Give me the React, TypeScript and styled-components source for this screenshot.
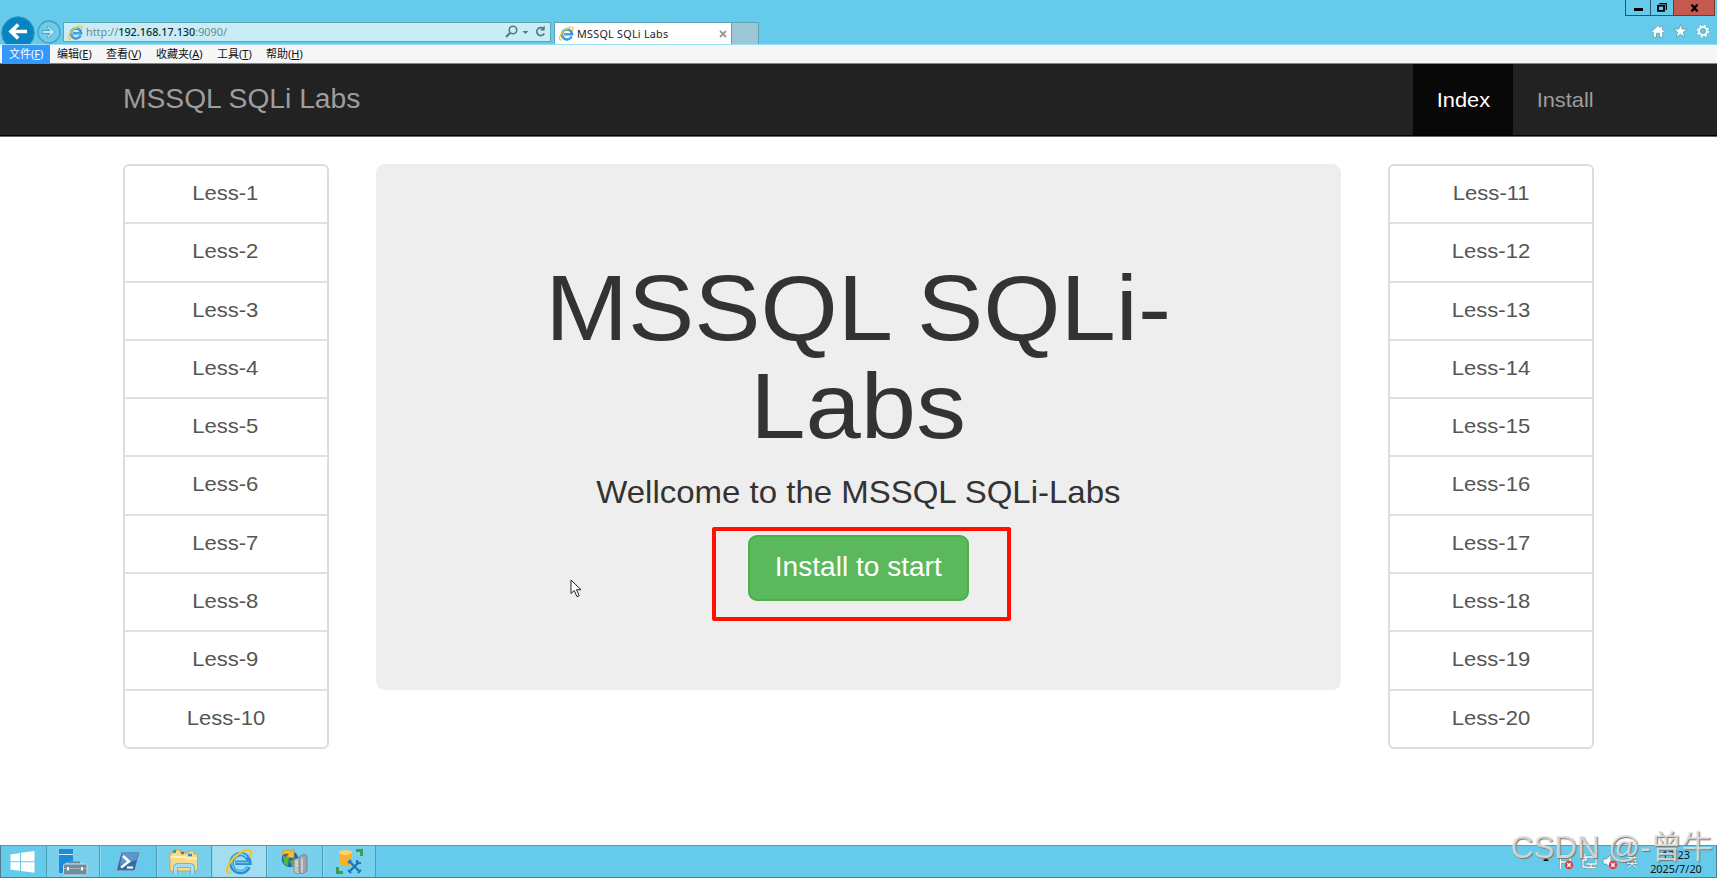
import styled, { createGlobalStyle } from 'styled-components';

const menuItems = [
  { label: '文件', hotkey: 'F', width: 48 },
  { label: '编辑', hotkey: 'E', width: 49 },
  { label: '查看', hotkey: 'V', width: 50 },
  { label: '收藏夹', hotkey: 'A', width: 61 },
  { label: '工具', hotkey: 'T', width: 49 },
  { label: '帮助', hotkey: 'H', width: 51 },
];

const leftLessons = Array.from({ length: 10 }, (_, i) => `Less-${i + 1}`);
const rightLessons = Array.from({ length: 10 }, (_, i) => `Less-${i + 11}`);

function IeLogo({ size }: { size: number }) {
  return (
    <svg width={size} height={size} viewBox="0 0 28 28" fill="none">
      <path
        d="M23.5 19.5 A9.3 9.3 0 1 1 24.3 15.2 H9.5"
        stroke="#2b8fd6"
        strokeWidth="4.6"
      />
      <path
        d="M22.6 19.5 A8.8 8.8 0 0 1 6.4 13 M10 15 H23.5"
        stroke="#6cc3ef"
        strokeWidth="1.6"
      />
      <path d="M7 11 A8.6 8.6 0 0 1 21.5 9.5" stroke="#7fd0f5" strokeWidth="1.6" />
      <path
        d="M4.6 25.8 C-1.5 27 1 17.5 8 10.3 C15 3 24.5 -0.5 26 3.6 C26.5 5 25.9 7 25 8.6"
        stroke="#f5c42c"
        strokeWidth="2.3"
        strokeLinecap="round"
      />
    </svg>
  );
}

function Browser() {
  return (
    <Chrome>
      <NavRow>
        <BackButton>
          <svg width="34" height="34" viewBox="0 0 34 34">
            <circle cx="17" cy="17" r="16.3" fill="#0684c4" stroke="#3d96bb" />
            <path d="M26 15.5 H10 M17.2 8.5 L10 15.5 L17.2 22.5" fill="none" stroke="#fff" strokeWidth="3.6" />
          </svg>
        </BackButton>
        <ForwardButton>
          <svg width="24" height="24" viewBox="0 0 24 24">
            <circle cx="12" cy="12" r="11" fill="#6ecbe9" stroke="#4a9fbf" strokeWidth="1.3" />
            <path
              d="M5.6 10.5 H13 L9.9 7.2 L11.5 5.9 L17.8 12 L11.5 18.1 L9.9 16.8 L13 13.5 H5.6 Z"
              fill="#bdeaf6"
              stroke="#499bb8"
              strokeWidth="0.9"
            />
          </svg>
        </ForwardButton>
        <AddressBar>
          <IeLogo size={15} />
          <Url>http://<b>192.168.17.130</b>:9090/</Url>
          <AddressTools>
            <svg width="42" height="16" viewBox="0 0 42 16" fill="none" stroke="#557985">
              <circle cx="8" cy="6" r="3.8" strokeWidth="1.6" />
              <path d="M5.2 8.8 L1 13" strokeWidth="2.2" />
              <path d="M17.5 7 H23.5 L20.5 10 Z" fill="#557985" stroke="none" />
              <path d="M39 5.2 A4 4 0 1 0 39.3 9.5" strokeWidth="1.7" />
              <path d="M39.7 1.5 V6.4 H34.9 Z" fill="#557985" stroke="none" />
            </svg>
          </AddressTools>
        </AddressBar>
        <Tab>
          <IeLogo size={15} />
          <TabTitle>MSSQL SQLi Labs</TabTitle>
          <svg width="8" height="8" viewBox="0 0 8 8">
            <path d="M1 1 L7 7 M7 1 L1 7" stroke="#9a9a9a" strokeWidth="1.8" />
          </svg>
        </Tab>
        <NewTab />
        <WindowSide>
          <WindowButtons>
            <WindowButton $width={25}>
              <svg width="9" height="7"><rect y="4" width="9" height="3" /></svg>
            </WindowButton>
            <WindowButton $width={23}>
              <svg width="10" height="9" viewBox="0 0 10 9" fill="none" stroke="#000">
                <path d="M2.5 0.7 H9.3 V7" strokeWidth="1.2" />
                <rect x="1" y="2.7" width="6" height="5.2" strokeWidth="1.8" />
              </svg>
            </WindowButton>
            <WindowButton $width={41} $close>
              <svg width="9" height="8" viewBox="0 0 9 8">
                <path d="M1.5 0.5 L7.5 7.5 M7.5 0.5 L1.5 7.5" stroke="#000" strokeWidth="2.2" />
              </svg>
            </WindowButton>
          </WindowButtons>
          <BrowserTools>
            <svg width="14" height="13" viewBox="0 0 14 13">
              <path
                d="M7 0.6 L9 2.4 V1.2 H11.3 V4.5 L13.5 6.7 L12.4 7.7 L11.7 7.1 V12.3 H8.5 V8.3 H5.5 V12.3 H2.3 V7.1 L1.6 7.7 L0.5 6.7 Z"
                fill="#fff"
                stroke="#5593a8"
                strokeWidth="0.7"
              />
            </svg>
            <svg width="15" height="14" viewBox="0 0 15 14">
              <path
                d="M7.5 0.4 L9.2 5.1 H14.4 L10.3 8.2 L11.8 13.2 L7.5 10.2 L3.2 13.2 L4.7 8.2 L0.6 5.1 H5.8 Z"
                fill="#fff"
                stroke="#5593a8"
                strokeWidth="0.7"
              />
            </svg>
            <svg width="14" height="14" viewBox="0 0 14 14" fill="none">
              <circle cx="7" cy="7" r="5.5" stroke="#5593a8" strokeWidth="3" strokeDasharray="2.3 2.02" />
              <circle cx="7" cy="7" r="5.5" stroke="#fff" strokeWidth="2" strokeDasharray="2.2 2.12" />
              <circle cx="7" cy="7" r="3.7" stroke="#fff" strokeWidth="2" />
              <circle cx="7" cy="7" r="2.5" stroke="#5593a8" strokeWidth="0.7" />
            </svg>
          </BrowserTools>
        </WindowSide>
      </NavRow>
      <MenuBar>
        {menuItems.map((item, i) => (
          <MenuItem key={item.hotkey} $width={item.width} $active={i === 0}>
            {item.label}(<u>{item.hotkey}</u>)
          </MenuItem>
        ))}
      </MenuBar>
    </Chrome>
  );
}

function LessonList({ items }: { items: string[] }) {
  return (
    <ListGroup>
      {items.map(item => (
        <ListItem key={item}>
          <Wide $scale={1.06}>{item}</Wide>
        </ListItem>
      ))}
    </ListGroup>
  );
}

function Taskbar() {
  return (
    <Bar>
      <StartButton>
        <svg width="25" height="22" viewBox="0 0 25 22" fill="#fff">
          <path d="M0.5 3.5 L10 2 V10.3 H0.5 Z M11 1.8 L24.5 0 V10.3 H11 Z M0.5 11.3 H10 V19.8 L0.5 18.4 Z M11 11.3 H24.5 V21.8 L11 20 Z" />
        </svg>
      </StartButton>
      <TaskButton $width={53} $running>
        <svg width="30" height="28" viewBox="0 0 30 28">
          <path d="M1 1 H15 V13 L8 15 L6 25 H1 Z" fill="#1e8bd8" />
          <path d="M1 6.5 H15" stroke="#d8effa" />
          <path d="M12 17 V14.5 H21 V17" fill="none" stroke="#6c8594" strokeWidth="1.8" />
          <rect x="5.5" y="16" width="23.5" height="11" rx="1.5" fill="#718c9f" stroke="#c8dfe8" />
          <path d="M6 20.5 H29" stroke="#a9bdc8" strokeWidth="0.8" />
          <path d="M10 19 V22.5 M24 19 V22.5" stroke="#fff" strokeWidth="1.8" />
        </svg>
      </TaskButton>
      <TaskButton $width={57}>
        <svg width="26" height="21" viewBox="0 0 26 21">
          <path d="M6 0.7 H25 L20 20 H1 Z" fill="#2f6da6" stroke="#8cb8d8" strokeWidth="1.4" />
          <path d="M7 2 H23.5 L21.5 9 L5 14 Z" fill="#5b98ca" />
          <path d="M8 5 L14 10.5 L6 16.5" fill="none" stroke="#fff" strokeWidth="2.6" />
          <path d="M12 16.5 H18" stroke="#fff" strokeWidth="2.2" />
        </svg>
      </TaskButton>
      <TaskButton $width={55} $running>
        <svg width="30" height="26" viewBox="0 0 30 26">
          <path d="M1 22 V4 H4 L5 1 H11 L12 4 H19 L20 2 H25 V5 H28.5 V22 Z" fill="#f3dc92" stroke="#c9a94f" />
          <path d="M4 2.5 H7" stroke="#24a344" strokeWidth="2.5" />
          <path d="M12 4 H15" stroke="#d94931" strokeWidth="2.5" />
          <path d="M19 6 H23" stroke="#2f8cd0" strokeWidth="2.5" />
          <path d="M1.5 8 H16 L18 9.5 H28" stroke="#fff0b5" strokeWidth="2" fill="none" />
          <path d="M6.5 25 V18.5 Q6.5 16.5 9 16.5 H21 Q23.5 16.5 23.5 18.5 V25" fill="none" stroke="#5ba6cc" strokeWidth="4.6" />
          <path d="M6.5 25 V18.5 Q6.5 16.5 9 16.5 H21 Q23.5 16.5 23.5 18.5 V25" fill="none" stroke="#a8dcf2" strokeWidth="3.2" />
        </svg>
      </TaskButton>
      <TaskButton $width={55} $running $active>
        <IeLogo size={27} />
      </TaskButton>
      <TaskButton $width={56} $running>
        <svg width="29" height="27" viewBox="0 0 29 27">
          <circle cx="10" cy="11" r="8.3" fill="#2461b8" />
          <path d="M3 8 L9 10 L8 18 L4 16 Z M10 13 L16 10 V16 L12 19 Z" fill="#4fbb3b" />
          <path d="M2 4 Q7 0 11 3 L14 1 V10 L6 9 L9 6 Q6 5 2 7 Z" fill="#f3bd2b" stroke="#d18c1d" strokeWidth="0.6" />
          <path d="M14 12 L19 9.5 L22 11 V25 L17 26 L14 24 Z" fill="#bfc4c7" stroke="#788187" strokeWidth="0.7" />
          <path d="M19 9 L24 6 L27 8 V23 L22 26 L19 24 Z" fill="#9ca4a9" stroke="#6d767b" strokeWidth="0.7" />
          <path d="M22 10 V25 M15.5 14 L18 15 M15.5 17 L18 18" stroke="#eef1f2" />
        </svg>
      </TaskButton>
      <TaskButton $width={54} $running>
        <svg width="27" height="25" viewBox="0 0 27 25">
          <path d="M20 1.5 H25.5 V7 M1.5 18 V23.5 H7" fill="none" stroke="#389e55" strokeWidth="3" />
          <path d="M3 3.5 V15 Q10 19 16 15 V3.5 Z" fill="#f8b12c" />
          <ellipse cx="9.5" cy="3.5" rx="6.5" ry="2.5" fill="#ffd16d" />
          <path d="M14 13 L23 22 M23 13 L14 22" stroke="#1978bd" strokeWidth="2.4" />
          <path d="M12 14 L15 11 M21 11 V14 H25 M12 21 L15 24 M22 24 L25 21" fill="none" stroke="#1978bd" strokeWidth="2" />
        </svg>
      </TaskButton>
      <Tray>
        <svg width="86" height="18" viewBox="0 0 86 18" fill="none">
          <path d="M1 8 L4 4.8 L7 8 Z" fill="#111" />
          <path d="M18.5 2 V16 M19 3 H28 V9 H19" stroke="#5a8391" strokeWidth="2.4" />
          <path d="M18.5 2 V16 M19 3 H28 V9 H19" stroke="#fff" strokeWidth="1.5" />
          <circle cx="27" cy="12" r="4.2" fill="#e13f3f" />
          <path d="M25.3 10.3 L28.7 13.7 M28.7 10.3 L25.3 13.7" stroke="#fff" strokeWidth="1.4" />
          <path d="M44 4 H54 V11 H45 M49 11 V14 M45 14.5 H53 M40 1 V5 M43 1 V5 M38.5 4.5 H44 V7 H41 V14 H45" stroke="#5a8391" strokeWidth="2.4" />
          <path d="M44 4 H54 V11 H45 M49 11 V14 M45 14.5 H53 M40 1 V5 M43 1 V5 M38.5 4.5 H44 V7 H41 V14 H45" stroke="#fff" strokeWidth="1.3" />
          <path d="M61 6 H64 L69 2 V15 L64 11 H61 Z" fill="#f4fafc" stroke="#5a8391" strokeWidth="0.7" />
          <circle cx="71" cy="12" r="4.2" fill="#e13f3f" />
          <path d="M69.3 10.3 L72.7 13.7 M72.7 10.3 L69.3 13.7" stroke="#fff" strokeWidth="1.4" />
        </svg>
        <InputMode>英</InputMode>
        <Clock>
          <span>13:23</span>
          <span>2025/7/20</span>
        </Clock>
      </Tray>
    </Bar>
  );
}

function App() {
  return (
    <Screen>
      <GlobalStyle />
      <Browser />
      <Navbar>
        <Brand><Wide $scale={1.045} $origin="left">MSSQL SQLi Labs</Wide></Brand>
        <NavLinks>
          <NavLink $width={100} $active><Wide $scale={1.05}>Index</Wide></NavLink>
          <NavLink $width={105}><Wide $scale={1.05}>Install</Wide></NavLink>
        </NavLinks>
      </Navbar>
      <Content>
        <LessonList items={leftLessons} />
        <Jumbotron>
          <Title><Wide $scale={1.064}>MSSQL SQLi-<br />Labs</Wide></Title>
          <Lead><Wide $scale={1.047}>Wellcome to the MSSQL SQLi-Labs</Wide></Lead>
          <ButtonWrap>
            <InstallButton><Wide $scale={1.04}>Install to start</Wide></InstallButton>
            <Highlight />
          </ButtonWrap>
        </Jumbotron>
        <LessonList items={rightLessons} />
      </Content>
      <Taskbar />
      <Pointer width="13" height="20" viewBox="0 0 13 20">
        <path
          d="M1 1 V14.5 L4.2 11.5 L7 17.7 L9.2 16.7 L6.5 10.7 H11 Z"
          fill="#fff"
          stroke="#222"
        />
      </Pointer>
      <Watermark>CSDN @-曾牛</Watermark>
    </Screen>
  );
}

export default App;

const GlobalStyle = createGlobalStyle`
* {
  box-sizing: border-box;
}
body {
  margin: 0;
  background: #fff;
}
`;

const uiFont = `'Noto Sans', 'Noto Sans CJK SC', sans-serif`;

const Screen = styled.div`
position: relative;
display: flex;
flex-direction: column;
width: 1717px;
height: 878px;
overflow: hidden;
background-color: #fff;
font-family: 'Liberation Sans', Arial, sans-serif;
`;

// the remote desktop is stretched a little wider than it is tall
const Wide = styled.span<{ $scale: number; $origin?: string }>`
display: inline-block;
transform: scaleX(${({ $scale }) => $scale});
transform-origin: ${({ $origin }) => $origin || 'center'};
white-space: nowrap;
`;

const Chrome = styled.header`
height: 64px;
background-color: #66caea;
border-bottom: 1px solid #858585;
`;

const NavRow = styled.div`
display: flex;
height: 45px;
border-bottom: 1px solid #98dff3;
`;

const BackButton = styled.div`
width: 36px;
height: 44px;
padding: 16px 0 0 1px;
overflow: hidden;
`;

const ForwardButton = styled.div`
width: 27px;
padding: 20px 0 0 1px;
`;

const AddressBar = styled.div`
display: flex;
align-items: center;
width: 488px;
height: 20px;
margin-top: 22px;
padding: 0 3px 0 4px;
background-color: #c9edf7;
border: 1px solid #5ba3b9;
`;

const Url = styled.span`
margin-left: 3px;
font: 10.85px/16px ${uiFont};
color: #71868e;
white-space: nowrap;
b {
  font-weight: 500;
  color: #172c33;
}
`;

const AddressTools = styled.div`
height: 16px;
margin-left: auto;
`;

const Tab = styled.div`
display: flex;
align-items: center;
width: 178px;
height: 22px;
margin: 22px 0 0 3px;
padding: 0 4px 0 4px;
background-color: #fff;
border: 1px solid #5ba3b9;
border-bottom: none;
`;

const TabTitle = styled.span`
flex: 1;
margin-left: 3px;
font: 10.8px ${uiFont};
letter-spacing: 0.25px;
color: #222;
`;

const NewTab = styled.div`
width: 27px;
height: 22px;
margin-top: 22px;
background-color: #9ec7d5;
border: 1px solid #5ba3b9;
border-width: 1px 1px 0 0;
`;

const WindowSide = styled.div`
display: flex;
flex-direction: column;
align-items: flex-end;
margin-left: auto;
padding-right: 2px;
`;

const WindowButtons = styled.div`
display: flex;
height: 16px;
border-left: 1px solid #285766;
`;

const WindowButton = styled.div<{ $width: number; $close?: boolean }>`
display: flex;
align-items: center;
justify-content: center;
width: ${({ $width }) => $width}px;
background-color: ${({ $close }) => $close ? '#c3594f' : 'transparent'};
border: 1px solid ${({ $close }) => $close ? '#76372f' : '#285766'};
border-width: 0 1px 1px 0;
`;

const BrowserTools = styled.div`
display: flex;
align-items: center;
gap: 8px;
margin-top: 8px;
padding-right: 5px;
`;

const MenuBar = styled.nav`
display: flex;
height: 18px;
padding-left: 2px;
background-color: #f6f6f6;
`;

const MenuItem = styled.div<{ $width: number; $active?: boolean }>`
width: ${({ $width }) => $width}px;
padding-left: 7px;
background-color: ${({ $active }) => $active ? '#3399ff' : 'transparent'};
color: ${({ $active }) => $active ? '#fff' : '#111'};
font: 11px/18px ${uiFont};
white-space: nowrap;
u {
  text-underline-offset: 1px;
}
`;

const Navbar = styled.nav`
display: flex;
justify-content: space-between;
height: 72px;
margin-bottom: 1px;
padding: 0 99px 0 123px;
background-color: #222;
border-bottom: 1px solid #000;
box-shadow: 0 1px #666;
`;

const Brand = styled.div`
color: #9d9d9d;
font-size: 27px;
line-height: 71px;
`;

const NavLinks = styled.div`
display: flex;
`;

const NavLink = styled.div<{ $width: number; $active?: boolean }>`
width: ${({ $width }) => $width}px;
background-color: ${({ $active }) => $active ? '#080808' : 'transparent'};
color: ${({ $active }) => $active ? '#fff' : '#9d9d9d'};
font-size: 20.8px;
line-height: 71px;
text-align: center;
`;

const Content = styled.main`
display: flex;
flex: 1;
align-items: flex-start;
justify-content: space-between;
padding: 27px 123px 0 122.5px;
`;

const ListGroup = styled.div`
width: 206px;
height: 585px;
display: flex;
flex-direction: column;
border: 2px solid #ddd;
border-radius: 6px;
`;

const ListItem = styled.div`
flex: 1;
color: #555;
font-size: 20.8px;
line-height: 54px;
text-align: center;
& + & {
  border-top: 2px solid #e0e0e0;
}
`;

const Jumbotron = styled.section`
display: flex;
flex-direction: column;
align-items: center;
width: 965px;
height: 526px;
padding-top: 95px;
background-color: #eee;
border-radius: 9px;
color: #333;
`;

const Title = styled.h1`
margin: 0;
font-size: 93.4px;
font-weight: 400;
line-height: 98px;
text-align: center;
`;

const Lead = styled.p`
margin: 16px 0 21px;
font-size: 31.5px;
line-height: 43px;
`;

const ButtonWrap = styled.div`
position: relative;
`;

const InstallButton = styled.button`
display: block;
width: 221px;
height: 66px;
padding: 0 0 1px;
background-color: #5cb85c;
border: 2px solid #4cae4c;
border-radius: 9px;
color: #fff;
font: 27px 'Liberation Sans', Arial, sans-serif;
`;

const Highlight = styled.div`
position: absolute;
top: -8px;
left: -36px;
width: 299px;
height: 94px;
border: 4px solid #ff1000;
border-radius: 2px;
`;

const Bar = styled.footer`
display: flex;
height: 33px;
background-color: #66caea;
border: 1px solid #4f7f8f;
border-top-color: #808e93;
`;

const StartButton = styled.div`
display: flex;
align-items: center;
justify-content: center;
width: 45px;
padding-right: 2px;
`;

const TaskButton = styled.div<{ $width: number; $running?: boolean; $active?: boolean }>`
display: flex;
align-items: center;
justify-content: center;
width: ${({ $width }) => $width}px;
background-color: ${({ $active, $running }) => $active ? '#a2ddf2' : $running ? '#78d0ec' : 'transparent'};
border-left: 1px solid #4d9cb5;
& + div {
  box-shadow: inset 1px 0 #8cd9ef;
}
&:nth-child(7) {
  border-right: 1px solid #4d9cb5;
}
`;

const Tray = styled.div`
display: flex;
align-items: center;
margin-left: auto;
padding-right: 12px;
&& {
  box-shadow: none;
}
`;

const InputMode = styled.span`
width: 22px;
margin-left: -2px;
color: #fff;
font: 12px ${uiFont};
text-shadow: 0 0 1px #24505e, 0 0 1px #24505e;
`;

const Clock = styled.div`
display: flex;
flex-direction: column;
align-items: center;
width: 56px;
font: 10.9px/14px ${uiFont};
color: #111;
`;

const Pointer = styled.svg`
position: absolute;
left: 570px;
top: 579px;
`;

const Watermark = styled.div`
position: absolute;
right: 4px;
top: 828px;
color: rgba(225, 225, 225, 0.85);
font: 31.3px/40px 'Liberation Sans', 'Noto Sans CJK SC', sans-serif;
text-shadow: 1px 1px 1px #777;
white-space: nowrap;
`;
